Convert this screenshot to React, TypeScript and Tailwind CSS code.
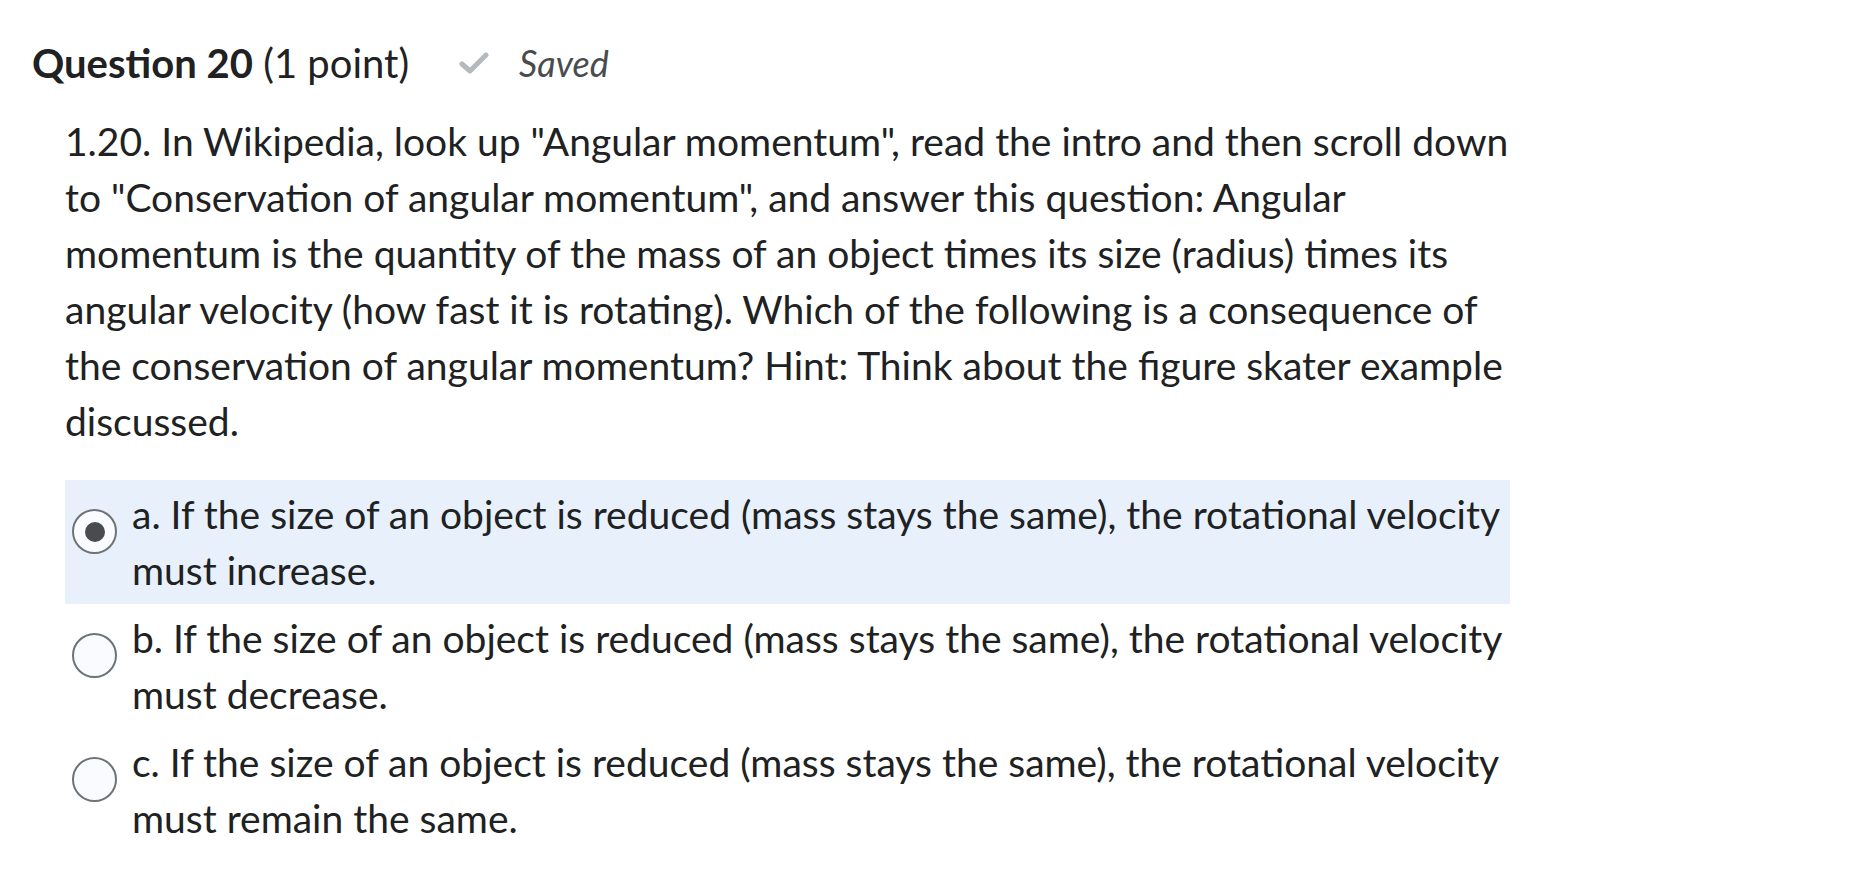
import React from "react";

const font = { fontFamily: "Lato, 'Noto Sans', sans-serif" };

function Radio({ checked }: { checked: boolean }) {
  return (
    <div className="flex h-[45px] w-[45px] shrink-0 items-center justify-center rounded-full border-2 border-[#6e7376] bg-[#f9fbff]">
      {checked && <div className="h-[20px] w-[20px] rounded-full bg-[#494c4e]" />}
    </div>
  );
}

function Option({ label, text, checked }: { label: string; text: string; checked?: boolean }) {
  return (
    <div className={`flex items-start gap-[15px] py-[6px] pl-[7px] pr-[8px] ${checked ? "bg-[#e8f1fb]" : ""}`}>
      <div className="pt-[23px]">
        <Radio checked={!!checked} />
      </div>
      <div className="text-[39px] leading-[56px] text-[#202122]">
        {label} {text}
      </div>
    </div>
  );
}

export default function App() {
  return (
    <div className="min-h-screen bg-white" style={font}>
      <div className="pl-[32px] pt-[36px]">
        <div className="flex items-center text-[#202122]">
          <span className="text-[40px] leading-[52px]">
            <span className="font-bold">Question 20</span> (1 point)
          </span>
          <svg className="ml-[50px]" width="30" height="24" viewBox="0 0 30 24">
            <path d="M3 13 L11 20 L27 4" fill="none" stroke="#b6babd" strokeWidth="5" strokeLinecap="round" strokeLinejoin="round" />
          </svg>
          <span className="ml-[30px] text-[36px] italic text-[#494c4e]">Saved</span>
        </div>
      </div>
      <div className="ml-[65px] mt-[23px] w-[1445px]">
        <p className="text-[39px] leading-[56px] text-[#202122]">
          1.20. In Wikipedia, look up "Angular momentum", read the intro and then scroll down to "Conservation of angular momentum", and answer this question: Angular momentum is the quantity of the mass of an object times its size (radius) times its angular velocity (how fast it is rotating). Which of the following is a consequence of the conservation of angular momentum? Hint: Think about the figure skater example discussed.
        </p>
        <div className="mt-[31px] flex flex-col">
          <Option checked label="a." text="If the size of an object is reduced (mass stays the same), the rotational velocity must increase." />
          <Option label="b." text="If the size of an object is reduced (mass stays the same), the rotational velocity must decrease." />
          <Option label="c." text="If the size of an object is reduced (mass stays the same), the rotational velocity must remain the same." />
        </div>
      </div>
    </div>
  );
}
